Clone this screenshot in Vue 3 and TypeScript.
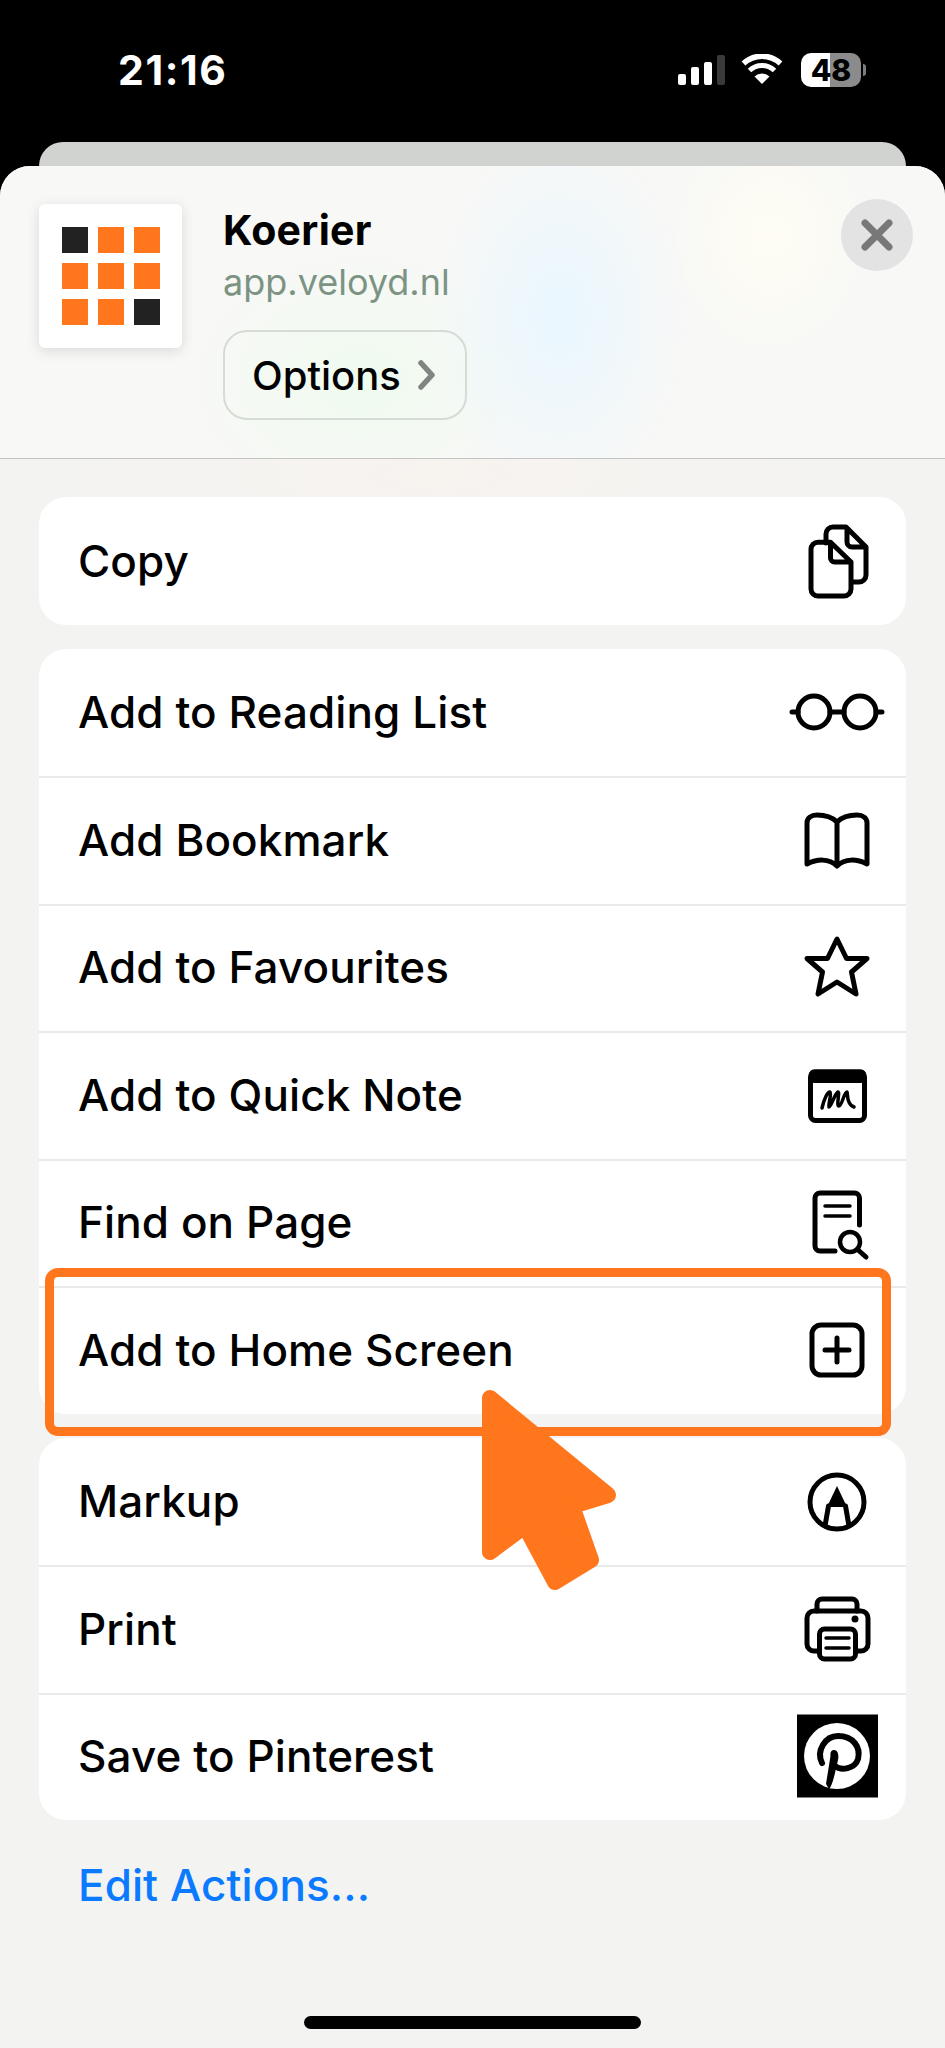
<template>
  <div class="phone">
    <header class="status">
      <span class="time">21:16</span>
      <div class="status-icons">
        <div class="signal">
          <i class="bar bar1"></i>
          <i class="bar bar2"></i>
          <i class="bar bar3"></i>
          <i class="bar bar4"></i>
        </div>
        <svg class="wifi" width="42" height="30" viewBox="0 0 42 30">
          <path d="M21 30 L13.5 22.5 A11 11 0 0 1 28.5 22.5 Z" fill="#fff" />
          <path d="M8.5 16.5 A18 18 0 0 1 33.5 16.5" fill="none" stroke="#fff" stroke-width="5" />
          <path d="M2.5 9.5 A27 27 0 0 1 39.5 9.5" fill="none" stroke="#fff" stroke-width="5.5" />
        </svg>
        <div class="battery">
          <div class="battery-body"><span>48</span></div>
          <i class="battery-nub"></i>
        </div>
      </div>
    </header>

    <div class="peek"></div>

    <main class="sheet">
      <section class="sheet-head">
        <div class="app-icon">
          <i v-for="(dark, i) in tiles" :key="i" class="tile" :class="{ dark }"></i>
        </div>
        <div class="app-info">
          <div class="app-name">Koerier</div>
          <div class="app-url">app.veloyd.nl</div>
          <div class="options">
            Options
            <svg width="18" height="30" viewBox="0 0 18 30">
              <path d="M3 3 L14 15 L3 27" fill="none" stroke="#808582" stroke-width="5.5" stroke-linecap="round" stroke-linejoin="round" />
            </svg>
          </div>
        </div>
        <div class="close">
          <svg width="36" height="36" viewBox="0 0 36 36">
            <path d="M6 6 L30 30 M30 6 L6 30" fill="none" stroke="#787878" stroke-width="7" stroke-linecap="round" />
          </svg>
        </div>
      </section>

      <section class="card first">
        <div class="row">
          <span>Copy</span>
          <svg class="icon" viewBox="-50 -50 100 100">
            <path d="M-11 -18 V-27 a7 7 0 0 1 7 -7 H9 L29 -14 V14 a7 7 0 0 1 -7 7 H15 M10 -33 V-19 a5 5 0 0 0 5 5 H29" class="ln" />
            <path d="M-6.5 -18.7 H-19 a7 7 0 0 0 -7 7 V28 a7 7 0 0 0 7 7 H7 a7 7 0 0 0 7 -7 V1 L-6.5 -18.7 V-3 a4 4 0 0 0 4 4 H14" class="ln" />
          </svg>
        </div>
      </section>

      <section class="card">
        <div class="row">
          <span>Add to Reading List</span>
          <svg class="icon" viewBox="-50 -50 100 100">
            <circle cx="-23" cy="0" r="16" class="ln" />
            <circle cx="23" cy="0" r="16" class="ln" />
            <path d="M-7 0 H7 M-45 0 H-39 M39 0 H45" class="ln" />
          </svg>
        </div>
        <div class="row">
          <span>Add Bookmark</span>
          <svg class="icon" viewBox="-50 -50 100 100">
            <path d="M0 25 V-18 C-5 -23 -13 -25 -20 -25 C-26 -25 -30 -22 -30 -17 V24 C-20 19 -8 18 0 26 C8 18 20 19 30 24 V-17 C30 -22 26 -25 20 -25 C13 -25 5 -23 0 -18" class="ln" />
          </svg>
        </div>
        <div class="row">
          <span>Add to Favourites</span>
          <svg class="icon" viewBox="-50 -50 100 100">
            <path d="M0 -28 L9.5 -8.5 H30 L14.5 5 L19 27 L0 15 L-19 27 L-14.5 5 L-30 -8.5 H-9.5 Z" class="ln" />
          </svg>
        </div>
        <div class="row">
          <span>Add to Quick Note</span>
          <svg class="icon" viewBox="-50 -50 100 100">
            <rect x="-26.5" y="-23" width="54" height="48.5" rx="5" class="ln" />
            <rect x="-28" y="-25.5" width="57" height="13.5" rx="5" />
            <path d="M-15 13 C-13 4 -9 -4 -7 -3 C-5 -2 -9 10 -8 12 C-6 12 -2 -2 1 -3 C3 -3 -1 11 2 11 C5 11 7 -3 10 -3 C11 -1 9 9 17 12" class="ln thin" />
          </svg>
        </div>
        <div class="row">
          <span>Find on Page</span>
          <svg class="icon" viewBox="-50 -50 100 100">
            <path d="M22.5 3 V-24 a5 5 0 0 0 -5 -5 H-17 a5 5 0 0 0 -5 5 V24 a5 5 0 0 0 5 5 H-2" class="ln" />
            <path d="M-12 -16 H13 M-12 -6 H13" class="ln thin" />
            <circle cx="13" cy="20" r="10" class="ln thick" />
            <path d="M20.5 27.5 L29 35" class="ln" />
          </svg>
        </div>
        <div class="row">
          <span>Add to Home Screen</span>
          <svg class="icon" viewBox="-50 -50 100 100">
            <rect x="-25" y="-25" width="50" height="50" rx="9" class="ln" />
            <path d="M0 -12 V12 M-12 0 H12" class="ln" />
          </svg>
        </div>
      </section>

      <section class="card">
        <div class="row">
          <span>Markup</span>
          <svg class="icon" viewBox="-50 -50 100 100">
            <circle cx="0" cy="1" r="27" class="ln" />
            <path d="M0 -15 L10 6 H-10 Z" />
            <path d="M-8.5 5 L-12 25 M8.5 5 L12 25" class="ln" />
          </svg>
        </div>
        <div class="row">
          <span>Print</span>
          <svg class="icon" viewBox="-50 -50 100 100">
            <path d="M-20 -18 V-25 a5 5 0 0 1 5 -5 H15 a5 5 0 0 1 5 5 V-18" class="ln" />
            <path d="M-20 22 H-23 a7 7 0 0 1 -7 -7 V-11 a7 7 0 0 1 7 -7 H24 a7 7 0 0 1 7 7 V15 a7 7 0 0 1 -7 7 H20" class="ln" />
            <rect x="-17.5" y="0" width="36" height="30" rx="5" class="ln paper" />
            <path d="M-11 9 H12 M-11 19 H12" class="ln thin" />
            <circle cx="18" cy="-10" r="3.5" />
          </svg>
        </div>
        <div class="row">
          <span>Save to Pinterest</span>
          <svg class="icon" viewBox="-50 -50 100 100">
            <rect x="-40" y="-41.5" width="81" height="83" fill="#000" />
            <circle cx="0" cy="0" r="33" fill="#fff" />
            <path d="M-15 7 C-21 -5 -12 -20 1 -20 C16 -20 24 -9 21 3 C18 13 4 15 -2 10" fill="none" stroke="#000" stroke-width="6" stroke-linecap="round" />
            <path d="M-3 -6 C-6 -6 -7 -3 -6.5 0 L-11 28 L-8 33 C-5 30 -3 22 1 4 C2 -1 1 -6 -3 -6 Z" />
          </svg>
        </div>
      </section>

      <a class="edit">Edit Actions...</a>
      <div class="home-bar"></div>
    </main>

    <div class="highlight"></div>
    <svg class="pointer" width="140" height="215" viewBox="0 0 140 215">
      <path d="M8 16 L126 113 L90 124 L109 178 L73 200 L43 144 L8 170 Z" fill="#ff761c" stroke="#ff761c" stroke-width="16" stroke-linejoin="round" />
    </svg>
  </div>
</template>

<script setup lang="ts">
  // true marks the two dark tiles of the app logo
  const tiles: boolean[] = [true, false, false, false, false, false, false, false, true];
</script>

<style scoped>
  .phone {
    position: relative;
    width: 945px;
    height: 2048px;
    overflow: hidden;
    background: #000;
    font-family: Inter, 'Liberation Sans', sans-serif;
    color: #000;
  }

  .status {
    height: 142px;
    display: flex;
    justify-content: space-between;
    align-items: flex-start;
    padding: 47px 79px 0 118px;
    box-sizing: border-box;
    color: #fff;
  }

  .time {
    font-size: 41px;
    font-weight: 700;
    line-height: 46px;
    letter-spacing: 1.6px;
  }

  .status-icons {
    display: flex;
    align-items: center;
    gap: 18px;
    padding-top: 6px;
  }

  .signal {
    display: flex;
    align-items: flex-end;
    gap: 5px;
    height: 30px;
    margin-right: -2px;
  }

  .bar {
    display: block;
    width: 8px;
    border-radius: 2px;
    background: #fff;
  }

  .bar1 { height: 11px; }
  .bar2 { height: 18px; }
  .bar3 { height: 23px; }
  .bar4 { height: 30px; background: #3a3a3a; }

  .wifi {
    margin-top: -2px;
  }

  .battery {
    display: flex;
    align-items: center;
    gap: 2px;
  }

  .battery-body {
    width: 60px;
    height: 34px;
    border-radius: 10px;
    background: linear-gradient(90deg, #fff 48%, #8b8b8b 48%);
    color: #000;
    font-size: 30px;
    font-weight: 800;
    line-height: 34px;
    text-align: center;
  }

  .battery-nub {
    display: block;
    width: 3px;
    height: 12px;
    border-radius: 0 3px 3px 0;
    background: #7d7d7d;
  }

  .peek {
    height: 24px;
    margin: 0 39px;
    border-radius: 28px 28px 0 0;
    background: #d0d3d0;
  }

  .sheet {
    height: 1882px;
    padding: 0 39px;
    border-radius: 30px 30px 0 0;
    background:
      radial-gradient(ellipse 420px 130px at 440px 310px, #f7f3ef 0%, rgba(247, 243, 239, 0) 100%),
      #f3f3f2;
    overflow: hidden;
  }

  .sheet-head {
    display: flex;
    align-items: flex-start;
    height: 293px;
    margin: 0 -39px;
    padding: 38px 32px 0 39px;
    box-sizing: border-box;
    border-bottom: 1px solid #c4c5c3;
    background:
      radial-gradient(ellipse 130px 190px at 560px 150px, #e9f7ff 0%, rgba(233, 247, 255, 0) 100%),
      radial-gradient(ellipse 170px 130px at 360px 215px, #effbef 0%, rgba(239, 251, 239, 0) 100%),
      radial-gradient(ellipse 100px 120px at 770px 70px, #fffdf3 0%, rgba(255, 253, 243, 0) 100%),
      #f8f8f6;
  }

  .app-icon {
    flex: none;
    display: grid;
    grid-template-columns: repeat(3, 26px);
    grid-auto-rows: 26px;
    gap: 10px;
    justify-content: center;
    align-content: center;
    width: 143px;
    height: 144px;
    border-radius: 6px;
    background: #fff;
    box-shadow: 0 3px 14px rgba(0, 0, 0, 0.13);
  }

  .tile {
    display: block;
    background: #ff761c;
  }

  .tile.dark {
    background: #222;
  }

  .app-info {
    flex: 1;
    margin-left: 41px;
    margin-top: 2px;
  }

  .app-name {
    font-size: 41px;
    font-weight: 700;
    line-height: 48px;
    letter-spacing: 0.3px;
  }

  .app-url {
    margin-top: 6px;
    font-size: 36px;
    line-height: 44px;
    color: #7c9384;
  }

  .options {
    display: inline-flex;
    align-items: center;
    gap: 17px;
    width: 244px;
    height: 90px;
    margin-top: 26px;
    padding-left: 27px;
    box-sizing: border-box;
    border: 2px solid #d4dcd5;
    border-radius: 24px;
    font-size: 40px;
    font-weight: 500;
  }

  .close {
    flex: none;
    display: flex;
    align-items: center;
    justify-content: center;
    width: 72px;
    height: 72px;
    margin-top: -5px;
    border-radius: 50%;
    background: #e3e3e3;
  }

  .card {
    margin-top: 24px;
    border-radius: 27px;
    background: #fff;
    overflow: hidden;
  }

  .card.first {
    margin-top: 38px;
  }

  .row {
    display: flex;
    align-items: center;
    justify-content: space-between;
    height: 127.5px;
    box-sizing: border-box;
    padding: 0 19px 0 39px;
    font-size: 44px;
    font-weight: 500;
    letter-spacing: 0.1px;
  }

  .row + .row {
    box-shadow: inset 0 2px 0 #e9e9e9;
  }

  .icon {
    flex: none;
    width: 100px;
    height: 100px;
  }

  .ln {
    fill: none;
    stroke: #000;
    stroke-width: 5;
    stroke-linecap: round;
    stroke-linejoin: round;
  }

  .ln.thin {
    stroke-width: 3.5;
  }

  .ln.thick {
    stroke-width: 4.5;
  }

  .ln.paper {
    fill: #fff;
  }

  .edit {
    display: block;
    margin-top: 38px;
    padding-left: 39px;
    font-size: 44px;
    font-weight: 500;
    line-height: 54px;
    letter-spacing: 0.1px;
    color: #0a7aff;
  }

  .home-bar {
    width: 337px;
    height: 13px;
    margin: 104px auto 0;
    border-radius: 7px;
    background: #000;
  }

  .highlight {
    position: absolute;
    left: 45px;
    top: 1268px;
    width: 846px;
    height: 168px;
    box-sizing: border-box;
    border: 9px solid #ff761c;
    border-radius: 13px;
  }

  .pointer {
    position: absolute;
    left: 482px;
    top: 1382px;
  }
</style>

<style>
  html,
  body {
    background: #000;
  }
</style>
